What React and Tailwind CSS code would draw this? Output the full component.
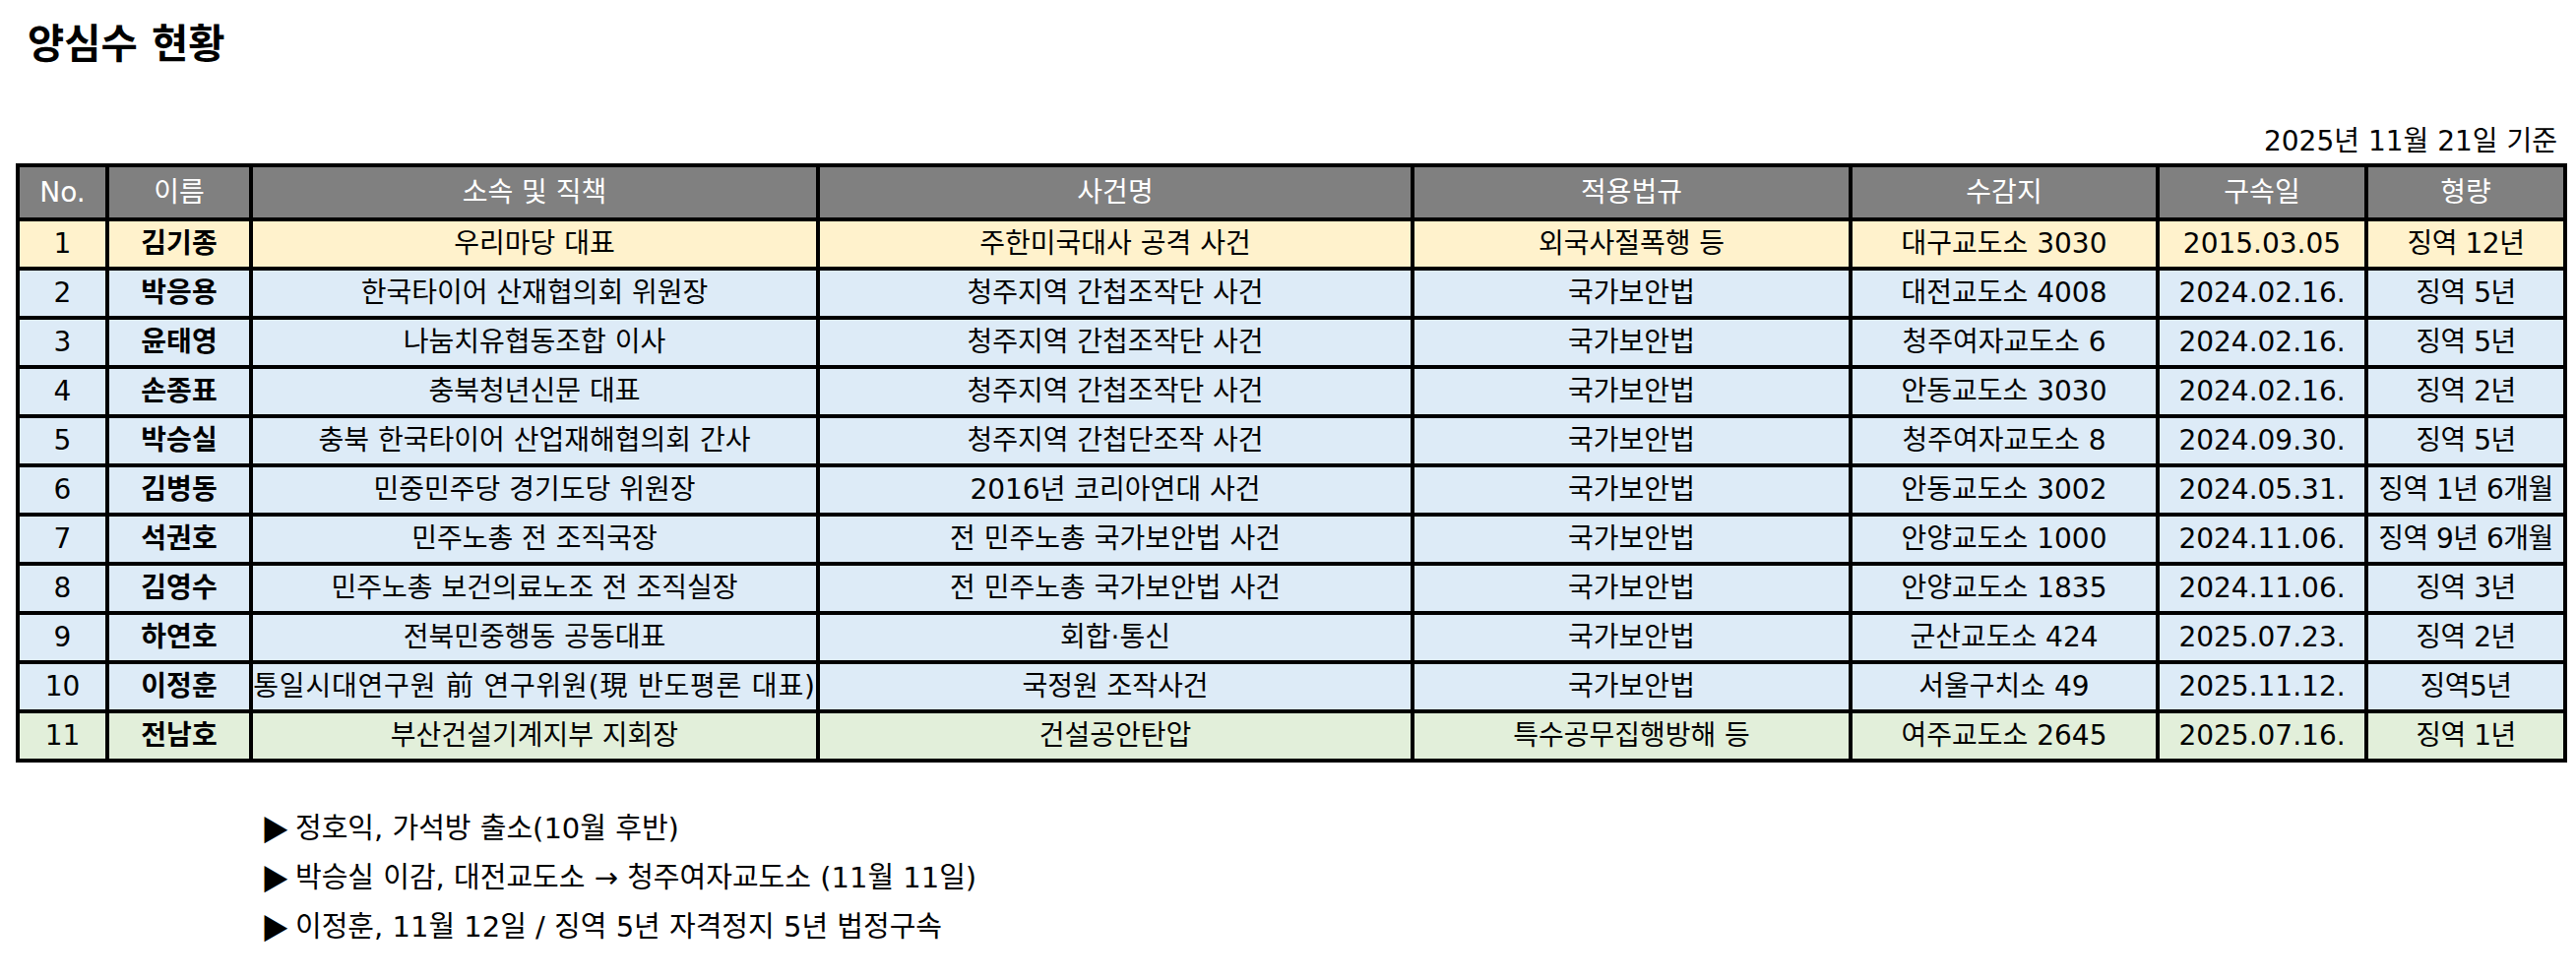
const rows = [
  { no: '1', name: '김기종', org: '우리마당 대표', event: '주한미국대사 공격 사건', law: '외국사절폭행 등', prison: '대구교도소 3030', date: '2015.03.05', term: '징역 12년', bg: 'bg-[#fff2cc]' },
  { no: '2', name: '박응용', org: '한국타이어 산재협의회 위원장', event: '청주지역 간첩조작단 사건', law: '국가보안법', prison: '대전교도소 4008', date: '2024.02.16.', term: '징역 5년', bg: 'bg-[#ddebf7]' },
  { no: '3', name: '윤태영', org: '나눔치유협동조합 이사', event: '청주지역 간첩조작단 사건', law: '국가보안법', prison: '청주여자교도소 6', date: '2024.02.16.', term: '징역 5년', bg: 'bg-[#ddebf7]' },
  { no: '4', name: '손종표', org: '충북청년신문 대표', event: '청주지역 간첩조작단 사건', law: '국가보안법', prison: '안동교도소 3030', date: '2024.02.16.', term: '징역 2년', bg: 'bg-[#ddebf7]' },
  { no: '5', name: '박승실', org: '충북 한국타이어 산업재해협의회 간사', event: '청주지역 간첩단조작 사건', law: '국가보안법', prison: '청주여자교도소 8', date: '2024.09.30.', term: '징역 5년', bg: 'bg-[#ddebf7]' },
  { no: '6', name: '김병동', org: '민중민주당 경기도당 위원장', event: '2016년 코리아연대 사건', law: '국가보안법', prison: '안동교도소 3002', date: '2024.05.31.', term: '징역 1년 6개월', bg: 'bg-[#ddebf7]' },
  { no: '7', name: '석권호', org: '민주노총 전 조직국장', event: '전 민주노총 국가보안법 사건', law: '국가보안법', prison: '안양교도소 1000', date: '2024.11.06.', term: '징역 9년 6개월', bg: 'bg-[#ddebf7]' },
  { no: '8', name: '김영수', org: '민주노총 보건의료노조 전 조직실장', event: '전 민주노총 국가보안법 사건', law: '국가보안법', prison: '안양교도소 1835', date: '2024.11.06.', term: '징역 3년', bg: 'bg-[#ddebf7]' },
  { no: '9', name: '하연호', org: '전북민중행동 공동대표', event: '회합·통신', law: '국가보안법', prison: '군산교도소 424', date: '2025.07.23.', term: '징역 2년', bg: 'bg-[#ddebf7]' },
  { no: '10', name: '이정훈', org: '통일시대연구원 前 연구위원(現 반도평론 대표)', event: '국정원 조작사건', law: '국가보안법', prison: '서울구치소 49', date: '2025.11.12.', term: '징역5년', bg: 'bg-[#ddebf7]', wide: true },
  { no: '11', name: '전남호', org: '부산건설기계지부 지회장', event: '건설공안탄압', law: '특수공무집행방해 등', prison: '여주교도소 2645', date: '2025.07.16.', term: '징역 1년', bg: 'bg-[#e2efda]' },
];

const headers = ['No.', '이름', '소속 및 직책', '사건명', '적용법규', '수감지', '구속일', '형량'];

const notes = [
  '정호익, 가석방 출소(10월 후반)',
  '박승실 이감, 대전교도소 → 청주여자교도소 (11월 11일)',
  '이정훈, 11월 12일 / 징역 5년 자격정지 5년 법정구속',
];

const Cell = ({ className = '', children }) => (
  <div className={`flex items-center justify-center whitespace-nowrap overflow-hidden ${className}`}>
    {children}
  </div>
);

export default function App() {
  return (
    <div className="w-[2617px] h-[994px] bg-white text-black font-['DejaVu_Sans','Noto_Sans_CJK_KR',sans-serif]">
      <h1 className="pl-[28px] pt-[21px] text-[40.5px] leading-[48px] font-bold">양심수 현황</h1>

      <div className="mt-[57px] w-[2608px] pr-[10px] text-right text-[28px] leading-[36px]">
        2025년 11월 21일 기준
      </div>

      <div className="ml-[16px] mt-[4px] w-[2592px] grid grid-cols-[87px_142px_572px_600px_441px_308px_208px_198px] grid-rows-[51px] auto-rows-[46px] gap-[4px] bg-black p-[4px] text-[28px]">
        {headers.map((h) => (
          <Cell key={h} className="bg-[#808080] text-white">{h}</Cell>
        ))}
        {rows.map((r) => (
          <div key={r.no} className="contents">
            <Cell className={r.bg}>{r.no}</Cell>
            <Cell className={`${r.bg} font-bold`}>{r.name}</Cell>
            <Cell className={`${r.bg} ${r.wide ? 'tracking-[0.8px]' : ''}`}>{r.org}</Cell>
            <Cell className={r.bg}>{r.event}</Cell>
            <Cell className={r.bg}>{r.law}</Cell>
            <Cell className={r.bg}>{r.prison}</Cell>
            <Cell className={r.bg}>{r.date}</Cell>
            <Cell className={`${r.bg} tracking-[-0.5px]`}>{r.term}</Cell>
          </div>
        ))}
      </div>

      <ul className="ml-[265px] mt-[42px] text-[29px] leading-[50px]">
        {notes.map((n) => (
          <li key={n} className="flex items-center whitespace-nowrap">
            <span className="w-[35px] font-['Noto_Sans_CJK_KR',sans-serif]">▶</span>
            <span>{n}</span>
          </li>
        ))}
      </ul>
    </div>
  );
}
